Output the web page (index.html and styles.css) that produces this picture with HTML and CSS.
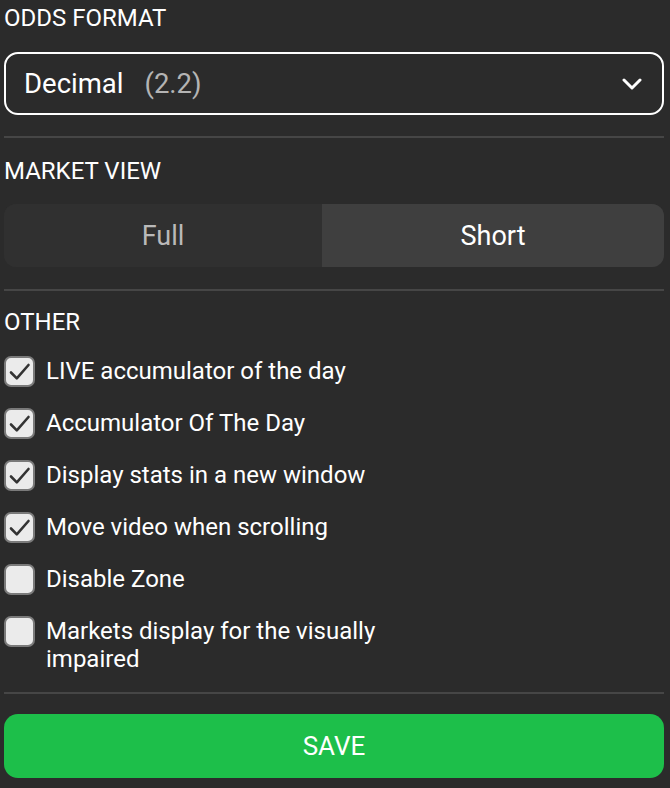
FILE: index.html
```html
<!DOCTYPE html>
<html lang="en">
<head>
<meta charset="utf-8">
<title>Settings</title>
<link rel="stylesheet" href="styles.css">
</head>
<body>
<div class="settings">
  <section class="group">
    <h2 class="title">ODDS FORMAT</h2>
    <div class="select">
      <span class="select-value">Decimal</span><span class="select-hint">(2.2)</span>
      <svg class="chevron" viewBox="0 0 20 14" width="20" height="14" aria-hidden="true">
        <path d="M2 3 L10 11 L18 3" fill="none" stroke="#ffffff" stroke-width="3" stroke-linecap="round" stroke-linejoin="round"/>
      </svg>
    </div>
  </section>
  <hr class="divider divider-1">
  <section class="group">
    <h2 class="title title-2">MARKET VIEW</h2>
    <div class="segment">
      <button class="seg-btn">Full</button>
      <button class="seg-btn active">Short</button>
    </div>
  </section>
  <hr class="divider divider-2">
  <section class="group">
    <h2 class="title title-3">OTHER</h2>
    <ul class="checks">
      <li class="check-row"><span class="box checked"><svg viewBox="0 0 31 31" width="31" height="31"><path d="M7 16.5 L12.8 22.3 L24.5 9" fill="none" stroke="#333" stroke-width="2.6" stroke-linecap="round" stroke-linejoin="round"/></svg></span><span class="label">LIVE accumulator of the day</span></li>
      <li class="check-row"><span class="box checked"><svg viewBox="0 0 31 31" width="31" height="31"><path d="M7 16.5 L12.8 22.3 L24.5 9" fill="none" stroke="#333" stroke-width="2.6" stroke-linecap="round" stroke-linejoin="round"/></svg></span><span class="label">Accumulator Of The Day</span></li>
      <li class="check-row"><span class="box checked"><svg viewBox="0 0 31 31" width="31" height="31"><path d="M7 16.5 L12.8 22.3 L24.5 9" fill="none" stroke="#333" stroke-width="2.6" stroke-linecap="round" stroke-linejoin="round"/></svg></span><span class="label">Display stats in a new window</span></li>
      <li class="check-row"><span class="box checked"><svg viewBox="0 0 31 31" width="31" height="31"><path d="M7 16.5 L12.8 22.3 L24.5 9" fill="none" stroke="#333" stroke-width="2.6" stroke-linecap="round" stroke-linejoin="round"/></svg></span><span class="label">Move video when scrolling</span></li>
      <li class="check-row"><span class="box"></span><span class="label">Disable Zone</span></li>
      <li class="check-row"><span class="box"></span><span class="label narrow">Markets display for the visually impaired</span></li>
    </ul>
  </section>
  <hr class="divider divider-3">
  <button class="save">SAVE</button>
</div>
</body>
</html>
```

FILE: styles.css
```css
* { box-sizing: border-box; }
html, body {
  margin: 0;
  padding: 0;
  background: #2b2b2b;
}
body {
  font-family: Roboto, "Liberation Sans", sans-serif;
  color: #ffffff;
}
.settings {
  padding: 0 6px 0 4px;
  width: 670px;
}
.group { margin: 0; }
.title {
  margin: 0;
  font-size: 24px;
  font-weight: 400;
  line-height: 36px;
  color: #ffffff;
}
.select {
  margin-top: 16px;
  height: 63px;
  border: 2px solid #ffffff;
  border-radius: 14px;
  display: flex;
  align-items: center;
  padding: 0 20px 0 18px;
}
.select-value {
  font-size: 27.5px;
  color: #ffffff;
}
.select-hint {
  font-size: 27.5px;
  color: #b4b4b4;
  margin-left: 21px;
}
.chevron {
  margin-left: auto;
}
.divider {
  border: 0;
  height: 2px;
  background: #464646;
  margin: 0;
}
.divider-1 { margin-top: 21px; }
.title-2 { margin-top: 15px; }
.segment {
  margin-top: 15px;
  height: 63px;
  display: grid;
  grid-template-columns: 318px 1fr;
  border-radius: 12px;
  overflow: hidden;
  background: #2f2f2f;
}
.seg-btn {
  border: 0;
  margin: 0;
  background: #303030;
  color: #b9b9b9;
  font-family: Roboto, "Liberation Sans", sans-serif;
  font-size: 27px;
  padding: 0;
}
.seg-btn.active {
  background: #3f3f3f;
  color: #ffffff;
}
.divider-2 { margin-top: 22px; }
.title-3 { margin-top: 13px; }
.checks {
  list-style: none;
  margin: 6px 0 0;
  padding: 0;
}
.check-row {
  display: flex;
  align-items: flex-start;
  padding: 11px 0;
}
.box {
  flex: 0 0 31px;
  width: 31px;
  height: 31px;
  margin-top: -1px;
  border: 2px solid #7a7a7a;
  border-radius: 7px;
  background: #ebebeb;
  position: relative;
}
.box svg {
  position: absolute;
  left: -2px;
  top: -2px;
}
.label {
  margin-left: 11px;
  font-size: 24px;
  line-height: 28px;
  color: #ffffff;
}
.label.narrow { max-width: 345px; }
.divider-3 { margin-top: 8px; }
.save {
  display: block;
  width: 100%;
  margin-top: 20px;
  height: 64px;
  border: 0;
  border-radius: 14px;
  background: #1dbf4a;
  color: #ffffff;
  font-family: Roboto, "Liberation Sans", sans-serif;
  font-size: 26px;
}
```
